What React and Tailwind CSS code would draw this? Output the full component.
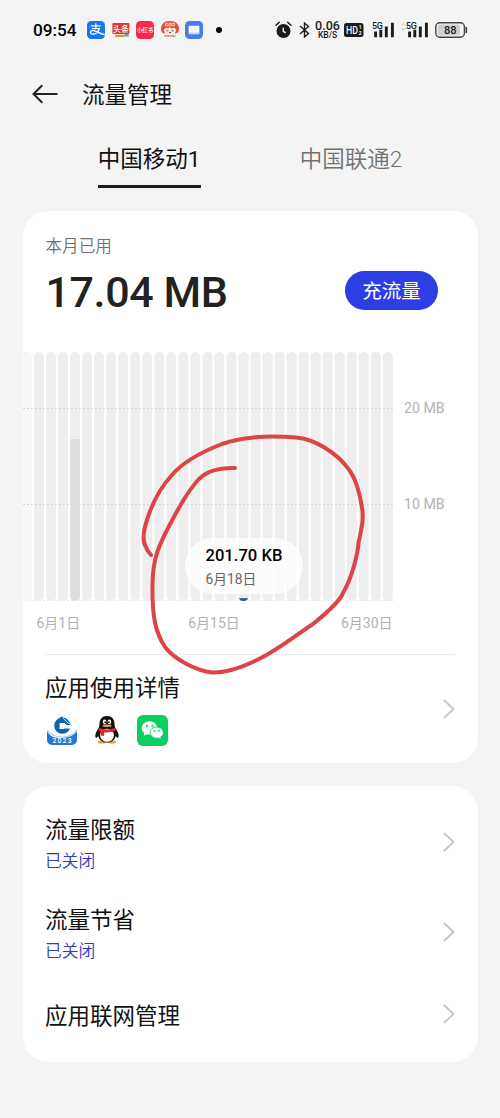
import React from "react";

const BAR_COUNT = 30;
const BAR_STEP = 12.03;
const BAR_WIDTH = 10;
const FIRST_BAR_X = 11;
const CHART_HEIGHT = 249;

// usage per day as bar height in px, keyed by day index
const USAGE = {
  3: { height: 162, color: "#dedede" },
  17: { height: 2.8, color: "#2f55a4" },
};

const SETTINGS = [
  { title: "流量限额", status: "已关闭", height: "h-[90px]" },
  { title: "流量节省", status: "已关闭", height: "h-[91px]" },
  { title: "应用联网管理", height: "h-[73px]" },
];

const Chevron = () => (
  <svg width="12" height="20" viewBox="0 0 12 20" fill="none" className="shrink-0">
    <path d="M0.8 1 L10.6 10 L0.8 19" stroke="#c4c4c4" strokeWidth="1.7" strokeLinejoin="round" />
  </svg>
);

// ── Status bar ──────────────────────────────────────────────────────────────

const NotificationIcons = () => (
  <div className="ml-[11px] flex items-center gap-[6.5px]">
    <svg width="18" height="18" viewBox="0 0 18 18">
      <rect width="18" height="18" rx="4.5" fill="#1677f0" />
      <path
        d="M3.800 4.800h9.800M8.800 2.300v5.400M4.800 7.600h7.600c-.8 2.600-3 5-5.500 5.500-2 .3-3.700-.6-3.400-2 .3-1.600 2.500-2 4.300-1.300 2.800 1 5.200 2.900 10 3.900"
        fill="none"
        stroke="#fff"
        strokeWidth="1.300"
      />
    </svg>
    <svg width="18" height="18" viewBox="0 0 18 18">
      <rect x="0.4" y="2.6" width="17.2" height="14" rx="1" fill="#fbe9e4" />
      <rect x="0.4" y="2" width="17" height="11" rx="1" fill="#d9393d" />
      <text x="8.9" y="10.6" textAnchor="middle" fontSize="8" fontWeight="500" fill="#fff">头条</text>
      <path d="M3 14.900h9.500" stroke="#f08436" strokeWidth="2" />
      <path d="M12.500 14.300h4.200" stroke="#35b5a9" strokeWidth="2.400" />
    </svg>
    <svg width="18" height="18" viewBox="0 0 18 18">
      <rect width="18" height="18" rx="4.5" fill="#f7264b" />
      <text x="9" y="11.100" textAnchor="middle" fontSize="5.400" fontWeight="500" fill="#fff">小红书</text>
    </svg>
    <svg width="18" height="18" viewBox="0 0 18 18">
      <path d="M0 8.500C0 3 3 0 9 0s9 3 9 8.500c0 2.400-1.500 3.700-3 3.700H3c-1.500 0-3-1.300-3-3.700Z" fill="#dd5137" />
      <path d="M4.500 2.300h2.500v2.500H4.500ZM8 2.300h2v2.500H8ZM11 2.300h2.500v2.500H11Z" fill="none" stroke="#f9d9c6" strokeWidth=".9" />
      <path d="M2.500 9l2.500-2.500 2 1.200L8.900 6l1.900 1.700 2.200-1.200L15.500 9l-2 3.800h-9Z" fill="#f8eee6" />
      <path d="M5.500 9.800h2M10.500 9.800h2M8 11.500h2" stroke="#9d3d2f" strokeWidth="1" />
      <path d="M3.500 15h11" stroke="#d9684f" strokeWidth="1.600" strokeDasharray="2 .5" />
    </svg>
    <svg width="18" height="18" viewBox="0 0 18 18">
      <rect width="18" height="18" rx="4.500" fill="#4a7ce8" />
      <rect x="3.600" y="4.700" width="10.800" height="8.600" rx="1" fill="#f4f7ff" />
      <path d="M4 12.300h10" stroke="#bdd0fb" strokeWidth="1.500" />
    </svg>
    <span className="ml-[6px] size-[6px] rounded-full bg-black" />
  </div>
);

const Signal = ({ updating }) => (
  <svg width="28" height="20" viewBox="0 0 28 20">
    {updating && <path d="M0.500 5.500l2-2 2 2M0.500 8l2 2 2-2" fill="none" stroke="#bbb" strokeWidth="1" />}
    <text x="5" y="8.600" fontSize="9" fontWeight="500" fill="#1b1b1b" textLength="11">5G</text>
    <path d="M8.600 11.500v5.800M13.800 9.800v7.500M19.300 6.500v10.800M25.400 2.800v14.500" stroke="#1b1b1b" strokeWidth="2.900" />
  </svg>
);

const SystemIcons = () => (
  <div className="flex items-center">
    <svg width="17" height="18" viewBox="0 0 17 18">
      <circle cx="8.500" cy="10" r="7" fill="#1b1b1b" />
      <path d="M1 4.200 4.300 1.300M12.700 1.300 16 4.200" stroke="#1b1b1b" strokeWidth="1.500" strokeLinecap="round" />
      <path d="M8.300 6.800v3.600l2.500 1.500" fill="none" stroke="#f4f4f4" strokeWidth="1.500" />
    </svg>
    <svg width="11" height="16" viewBox="0 0 11 16" className="ml-[7px]">
      <path d="M1 4l8.500 7.500L5.500 15V1l4 3.500L1 12" fill="none" stroke="#1b1b1b" strokeWidth="1.400" />
    </svg>
    <div className="ml-[5px] flex w-[25px] flex-col items-center font-medium text-[#1b1b1b]">
      <span className="text-[12.500px] leading-[11px]">0.06</span>
      <span className="text-[8.500px] leading-[9px]">KB/S</span>
    </div>
    <svg width="20" height="14" viewBox="0 0 20 14" className="ml-[4px]">
      <rect width="19.500" height="14" rx="2.500" fill="#1b1b1b" />
      <text x="2" y="11" fontSize="11" fontWeight="500" fill="#f4f4f4" textLength="12" lengthAdjust="spacingAndGlyphs">HD</text>
      <text x="14.800" y="6" fontSize="5" fontWeight="700" fill="#f4f4f4">1</text>
      <text x="14.800" y="12.200" fontSize="5" fontWeight="700" fill="#f4f4f4">2</text>
    </svg>
    <div className="ml-[3px] flex gap-[6px]">
      <Signal />
      <Signal updating />
    </div>
    <svg width="33" height="16" viewBox="0 0 33 16" className="ml-[6px]">
      <rect x="0.800" y="0.800" width="28.600" height="14.400" rx="4" fill="#f4f4f4" stroke="#444" strokeWidth="1.400" />
      <rect x="2.700" y="2.600" width="22.300" height="10.800" rx="2.500" fill="#cfcfcf" />
      <path d="M31.300 5.500v5" stroke="#444" strokeWidth="1.600" strokeLinecap="round" />
      <text x="15.200" y="12" textAnchor="middle" fontSize="11" fontWeight="500" fill="#1b1b1b">88</text>
    </svg>
  </div>
);

const StatusBar = () => (
  <div className="flex h-[60px] items-center justify-between pl-[33px] pr-[32px]">
    <div className="flex items-center">
      <span className="w-[43px] pt-px text-[17.200px] font-medium text-black">09:54</span>
      <NotificationIcons />
    </div>
    <SystemIcons />
  </div>
);

// ── Usage chart ─────────────────────────────────────────────────────────────

const UsageBars = () => (
  <svg width="371" height="250" viewBox="0 0 371 250" className="block">
    <defs>
      <clipPath id="barShapes">
        {Array.from({ length: BAR_COUNT }, (_, i) => (
          <rect key={i} x={FIRST_BAR_X + i * BAR_STEP} y="0" width={BAR_WIDTH} height={CHART_HEIGHT} rx="4.500" />
        ))}
      </clipPath>
    </defs>
    <path d="M0 248.500H371" stroke="#e6e6e6" strokeWidth="1" strokeDasharray="2 2" />
    <rect x="-6" y="0" width="15" height={CHART_HEIGHT} rx="5" fill="#f8f8f8" />
    <g clipPath="url(#barShapes)">
      <rect width="371" height={CHART_HEIGHT} fill="#eeeeee" />
      {Object.entries(USAGE).map(([day, bar]) => (
        <rect
          key={day}
          x={FIRST_BAR_X + day * BAR_STEP}
          y={CHART_HEIGHT - bar.height}
          width={BAR_WIDTH}
          height={bar.height}
          fill={bar.color}
        />
      ))}
    </g>
    {[56, 152].map((y) => (
      <path key={y} d={`M0 ${y}.500H371`} stroke="#d6d6d6" strokeWidth="1" strokeDasharray="2 2" />
    ))}
  </svg>
);

const UsageChart = () => (
  <div className="relative mt-[31.500px]">
    <div className="flex">
      <UsageBars />
      <div className="flex flex-col gap-[76px] pl-[10.500px] pt-[46px] text-[14.200px] leading-5 text-[#b2b2b2]">
        <span className="whitespace-nowrap">20 MB</span>
        <span className="whitespace-nowrap">10 MB</span>
      </div>
    </div>
    <div className="flex w-[370px] pl-[14px] pt-[10.500px] text-[14px] leading-5 text-[#b2b2b2]">
      <span>6月1日</span>
      <span className="ml-[108px]">6月15日</span>
      <span className="ml-auto">6月30日</span>
    </div>

    {/* tooltip of the selected day */}
    <div className="absolute left-[162px] top-[186px] flex h-[56px] w-[118.500px] flex-col justify-center rounded-[28px] bg-white/85 pl-[21px] pt-px">
      <span className="text-[16.600px] font-medium leading-[24px] text-black">201.70 KB</span>
      <span className="text-[13.800px] leading-[22px] text-[#666]">6月18日</span>
    </div>

    {/* hand-drawn marker */}
    <svg width="240" height="250" viewBox="130 430 240 250" className="pointer-events-none absolute left-[107px] top-[77.500px]">
      <path
        d="M235 468 C220 467.500 207 471 199 479 C186 493 176 513 166 532 C157 550 153 561 152.500 584 C152 615 155 632 165 647 C175 660 197 671 212 672.500 C228 673 245 666 259 659 C279 649 296 635 313 624 C329 611 341 599 343 593 C354 574 358 550 358.500 543 C363 522 363 520 362.500 511 C360 493 356 480 350 471 C337 452 314 439 296 437.500 C265 435 239 438 222 444 C199 453 181 464 172 475 C159 489 151 507 147 520 C143 532 142 541 146 547 C147 551 149 552 151 555"
        fill="none"
        stroke="#dc4447"
        strokeWidth="4"
        strokeLinecap="round"
        strokeLinejoin="round"
      />
    </svg>
  </div>
);

// ── App icons ───────────────────────────────────────────────────────────────

const BankIcon = () => (
  <svg width="30" height="31" viewBox="0 0 30 31">
    <path d="M0 16C3 21.500 8 23.500 15 23S27 20.500 30 16V25a5 5 0 0 1-5 5H5a5 5 0 0 1-5-5Z" fill="#2478d3" />
    <path d="M0 15C4 20.500 9 22.200 15 22.200S26 20.500 30 15" fill="none" stroke="#a9d2f5" strokeWidth="1.300" />
    <circle cx="15.300" cy="10.700" r="8.100" fill="#0966b0" />
    <path d="M12.600 8h10l3 2.500-2.800 3h-5.200l-1 .6h-4Z" fill="#fff" />
    <path d="M15 1.500l9 8.500h-4.500L12.500 3Z" fill="#0966b0" />
    <path d="M16 3.200l6 5.600" stroke="#fff" strokeWidth=".8" />
    <text x="15" y="28.300" textAnchor="middle" fontSize="6.800" fontWeight="500" fill="#fff" textLength="19">2023</text>
  </svg>
);

const PenguinIcon = () => (
  <svg width="24" height="28" viewBox="0 0 24 28">
    <ellipse cx="7" cy="26" rx="4.200" ry="1.700" fill="#efa52c" />
    <ellipse cx="17" cy="26" rx="4.200" ry="1.700" fill="#efa52c" />
    <path d="M12 0C7 0 4.500 3.500 4.500 8c0 3-1.200 4.500-2.700 7C.3 17.600 0 20 .6 21.500c.6 1 2-.5 2.700-1.500.8 4 4 6.500 8.700 6.500s7.900-2.500 8.700-6.500c.7 1 2.100 2.500 2.700 1.500.6-1.500.3-3.900-1.200-6.500-1.500-2.500-2.700-4-2.700-7 0-4.500-2.500-8-7.500-8Z" fill="#111" />
    <ellipse cx="12" cy="19.300" rx="6.900" ry="6.500" fill="#fff" />
    <ellipse cx="9.600" cy="5.800" rx="1.800" ry="2.400" fill="#fff" />
    <ellipse cx="14.400" cy="5.800" rx="1.800" ry="2.400" fill="#fff" />
    <circle cx="10.200" cy="6.200" r=".9" fill="#111" />
    <circle cx="13.900" cy="6.200" r=".9" fill="#111" />
    <ellipse cx="12" cy="9.700" rx="4.500" ry="1.200" fill="#efa52c" />
    <path d="M4 11.800c5 2.200 11 2.200 16 0l.6 2.800c-5 2-7.500 2.200-11.300 1.800l-.3 3.600-3.500-.5.300-3.900c-1-.3-1.700-.6-2.400-1Z" fill="#e3262f" />
  </svg>
);

const WechatIcon = () => (
  <svg width="31" height="31" viewBox="0 0 31 31">
    <rect width="31" height="31" rx="6" fill="#09cf60" />
    <path d="M7.500 17.500l-.8 3.200 3.500-1.700Z" fill="#fff" />
    <ellipse cx="12.500" cy="13" rx="7.800" ry="6.700" fill="#fff" />
    <path d="M22.500 21l1.700 2.800-4-1Z" fill="#fff" />
    <ellipse cx="19.700" cy="17.600" rx="6.700" ry="5.700" fill="#fff" stroke="#09cf60" strokeWidth=".9" />
    <circle cx="10" cy="10.900" r="1.100" fill="#09cf60" />
    <circle cx="15.300" cy="10.900" r="1.100" fill="#09cf60" />
    <circle cx="17.600" cy="15.900" r=".9" fill="#09cf60" />
    <circle cx="22" cy="15.900" r=".9" fill="#09cf60" />
  </svg>
);

const UsageCard = () => (
  <section className="mx-[22.500px] mt-[22.500px] h-[552.500px] overflow-hidden rounded-[25px] bg-white pt-[24px]">
    <div className="flex h-[86px] justify-between pl-[23px] pr-[39.500px]">
      <div>
        <p className="pt-px text-[16.600px] font-[350] leading-[22px] text-[#707070]">本月已用</p>
        <p className="mt-[8px] whitespace-nowrap text-[43px] font-medium leading-[52px] tracking-[-0.4px] text-[#222]">17.04 MB</p>
      </div>
      <button
        type="button"
        className="mt-[36px] h-[39.500px] w-[93px] rounded-full bg-[#2c3fe5] pt-[2px] text-[19.500px] leading-[37px] text-white"
      >
        充流量
      </button>
    </div>

    <UsageChart />

    <div className="mx-[22.500px] mt-[21.500px] flex h-[108px] items-center justify-between border-t border-[#ececec]">
      <div>
        <p className="pt-px text-[22.500px] leading-[30px] text-[#111]">应用使用详情</p>
        <div className="mt-[12px] flex items-center pl-[1.500px]">
          <BankIcon />
          <span className="ml-[18px]"><PenguinIcon /></span>
          <span className="ml-[18px]"><WechatIcon /></span>
        </div>
      </div>
      <Chevron />
    </div>
  </section>
);

const SettingsCard = () => (
  <section className="mx-[22.500px] mt-[22.500px] h-[276.500px] rounded-[25px] bg-white px-[22.500px] pt-[11px]">
    {SETTINGS.map((item) => (
      <div key={item.title} className={`flex items-center justify-between ${item.height}`}>
        <div className="pt-[4px]">
          <p className="text-[22.500px] leading-[30px] text-[#111]">{item.title}</p>
          {item.status && <p className="mt-[4px] text-[16.800px] font-[350] leading-[24px] text-[#3239c4]">{item.status}</p>}
        </div>
        <Chevron />
      </div>
    ))}
  </section>
);

const App = () => (
  <main className="h-[1118px] w-[500px] overflow-hidden bg-[#f4f4f4] font-[Roboto,'Noto_Sans_CJK_SC',sans-serif]">
    <StatusBar />

    <header className="flex h-[68px] items-center pl-[32px]">
      <svg width="26" height="20" viewBox="0 0 26 20" fill="none">
        <path d="M10.300 1.200 1.500 10l8.800 8.800M1.500 10h24" stroke="#222" strokeWidth="2" />
      </svg>
      <h1 className="ml-[24px] pt-[3px] text-[22.500px] text-[#111]">流量管理</h1>
    </header>

    <nav className="flex h-[60px] justify-center gap-[99px] text-[22.500px] leading-[32px]">
      <div className="w-[103px] whitespace-nowrap border-b-[3px] border-[#1b1b1b] pt-[15px] text-center text-[#111]">
        中国移动1
      </div>
      <div className="w-[103px] whitespace-nowrap pt-[15px] text-center font-[350] text-[#707070]">中国联通2</div>
    </nav>

    <UsageCard />
    <SettingsCard />
  </main>
);

export default App;
